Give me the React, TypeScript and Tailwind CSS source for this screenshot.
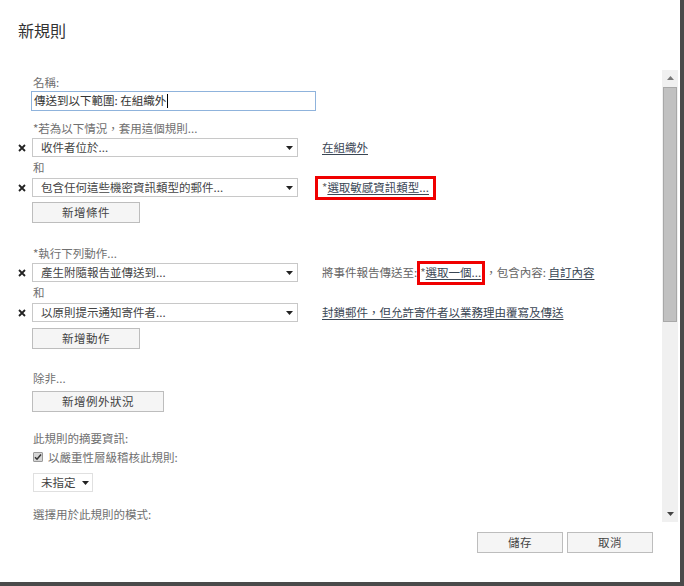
import React from 'react';

const font = { fontFamily: '"Noto Sans CJK TC", "Noto Sans", sans-serif' };

function Arrow() {
  return (
    <svg width="7" height="4" viewBox="0 0 7 4" className="shrink-0">
      <path d="M0 0h7L3.5 4z" fill="#222" />
    </svg>
  );
}

function Select({ text }: { text: string }) {
  return (
    <div className="flex h-[19px] w-[266px] items-center justify-between border border-[#c8c8c8] bg-white pl-[8px] pr-[4px] text-[11.5px] leading-none text-[#444]">
      <span>{text}</span>
      <Arrow />
    </div>
  );
}

function Row({ text, children }: { text: string; children?: React.ReactNode }) {
  return (
    <div className="flex h-[19px] items-center">
      <span className="flex w-[14px] items-center">
        <svg width="8" height="8" viewBox="0 0 8 8">
          <path d="M1 1l6 6M7 1L1 7" stroke="#222" strokeWidth="1.8" />
        </svg>
      </span>
      <Select text={text} />
      <div className="ml-[24px] flex h-[19px] items-center text-[11.5px] leading-none text-[#666]">{children}</div>
    </div>
  );
}

function Btn({ label, w }: { label: string; w: string }) {
  return (
    <div className={`flex h-[21px] items-center justify-center border border-[#bdbdbd] bg-[#f5f5f5] text-[11.5px] leading-none tracking-[0.5px] text-[#444] ${w}`}>
      {label}
    </div>
  );
}

function Link({ children }: { children: React.ReactNode }) {
  return <span className="text-[#3a4654] underline underline-offset-2">{children}</span>;
}

function Label({ children, className = '' }: { children: React.ReactNode; className?: string }) {
  return <div className={`pl-[33px] text-[11.5px] leading-[16px] text-[#707070] ${className}`}>{children}</div>;
}

export default function App() {
  return (
    <div style={font} className="h-[586px] w-[684px] overflow-hidden bg-white">
      <div className="flex h-[586px] w-[684px] flex-col border-b-[4px] border-r-[4px] border-[#4a4a4a]">
        <div className="h-[70px] pl-[18px] pt-[20px] text-[16px] leading-[20px] text-[#333]">新規則</div>

        <div className="flex h-[452px]">
          <div className="flex-1 overflow-hidden">
            <Label className="mt-[4px]">名稱:</Label>
            <div className="ml-[31px] mt-[1px] flex h-[20px] w-[285px] items-center border border-[#8fb3dc] pl-[2px] text-[11.5px] leading-none text-[#333]">
              傳送到以下範圍: 在組織外<span className="ml-[1px] h-[14px] w-px bg-black" />
            </div>

            <Label className="mt-[9px]">*若為以下情況，套用這個規則...</Label>
            <div className="mt-[2px] pl-[18px]">
              <Row text="收件者位於...">
                <Link>在組織外</Link>
              </Row>
            </div>
            <Label className="mt-[2px]">和</Label>
            <div className="mt-[3px] pl-[18px]">
              <Row text="包含任何這些機密資訊類型的郵件...">
                <span className="-ml-[7px] flex h-[24px] shrink-0 items-center border-[3px] border-[#f00000] pl-[4px] pr-[4px]">
                  *<Link>選取敏感資訊類型...</Link>
                </span>
              </Row>
            </div>
            <div className="ml-[32px] mt-[5px]">
              <Btn label="新增條件" w="w-[108px]" />
            </div>

            <Label className="mt-[22px]">*執行下列動作...</Label>
            <div className="mt-[2px] pl-[18px]">
              <Row text="產生附隨報告並傳送到...">
                將事件報告傳送至:
                <span className="flex h-[24px] shrink-0 items-center border-[3px] border-[#f00000] pr-[1px]">
                  *<Link>選取一個...</Link>
                </span>
                ，包含內容:&nbsp;<Link>自訂內容</Link>
              </Row>
            </div>
            <Label className="mt-[2px]">和</Label>
            <div className="mt-[3px] pl-[18px]">
              <Row text="以原則提示通知寄件者...">
                <Link>封鎖郵件，但允許寄件者以業務理由覆寫及傳送</Link>
              </Row>
            </div>
            <div className="ml-[32px] mt-[6px]">
              <Btn label="新增動作" w="w-[108px]" />
            </div>

            <Label className="mt-[21px]">除非...</Label>
            <div className="ml-[32px] mt-[5px]">
              <Btn label="新增例外狀況" w="w-[132px]" />
            </div>

            <Label className="mt-[18px]">此規則的摘要資訊:</Label>
            <div className="mt-[3px] flex items-center pl-[33px] text-[11.5px] leading-[16px] text-[#707070]">
              <span className="flex h-[10px] w-[10px] items-center justify-center rounded-[1px] border border-[#999] bg-[#d6d6d6]">
                <svg width="8" height="8" viewBox="0 0 8 8">
                  <path d="M1 4.2l2 2L7 1.5" stroke="#333" strokeWidth="1.5" fill="none" />
                </svg>
              </span>
              <span className="ml-[5px]">以嚴重性層級稽核此規則:</span>
            </div>
            <div className="ml-[33px] mt-[8px] flex h-[19px] w-[60px] items-center gap-[6px] border border-[#e0e0e0] pl-[7px] text-[11.5px] leading-none text-[#444]">
              未指定 <Arrow />
            </div>
            <Label className="mt-[14px]">選擇用於此規則的模式:</Label>
          </div>

          <div className="ml-[2px] mr-[2px] flex w-[16px] flex-col bg-[#f0f0f0]">
            <div className="flex h-[16px] items-center justify-center">
              <svg width="7" height="4" viewBox="0 0 7 4">
                <path d="M0 4h7L3.5 0z" fill="#777" />
              </svg>
            </div>
            <div className="mx-[1px] mt-[1px] h-[235px] border border-[#a8a8a8] bg-[#c1c1c1]" />
            <div className="flex-1" />
            <div className="flex h-[16px] items-center justify-center">
              <svg width="7" height="4" viewBox="0 0 7 4">
                <path d="M0 0h7L3.5 4z" fill="#444" />
              </svg>
            </div>
          </div>
        </div>

        <div className="flex justify-end gap-[4px] pr-[27px] pt-[10px]">
          <Btn label="儲存" w="w-[86px]" />
          <Btn label="取消" w="w-[86px]" />
        </div>
      </div>
    </div>
  );
}
